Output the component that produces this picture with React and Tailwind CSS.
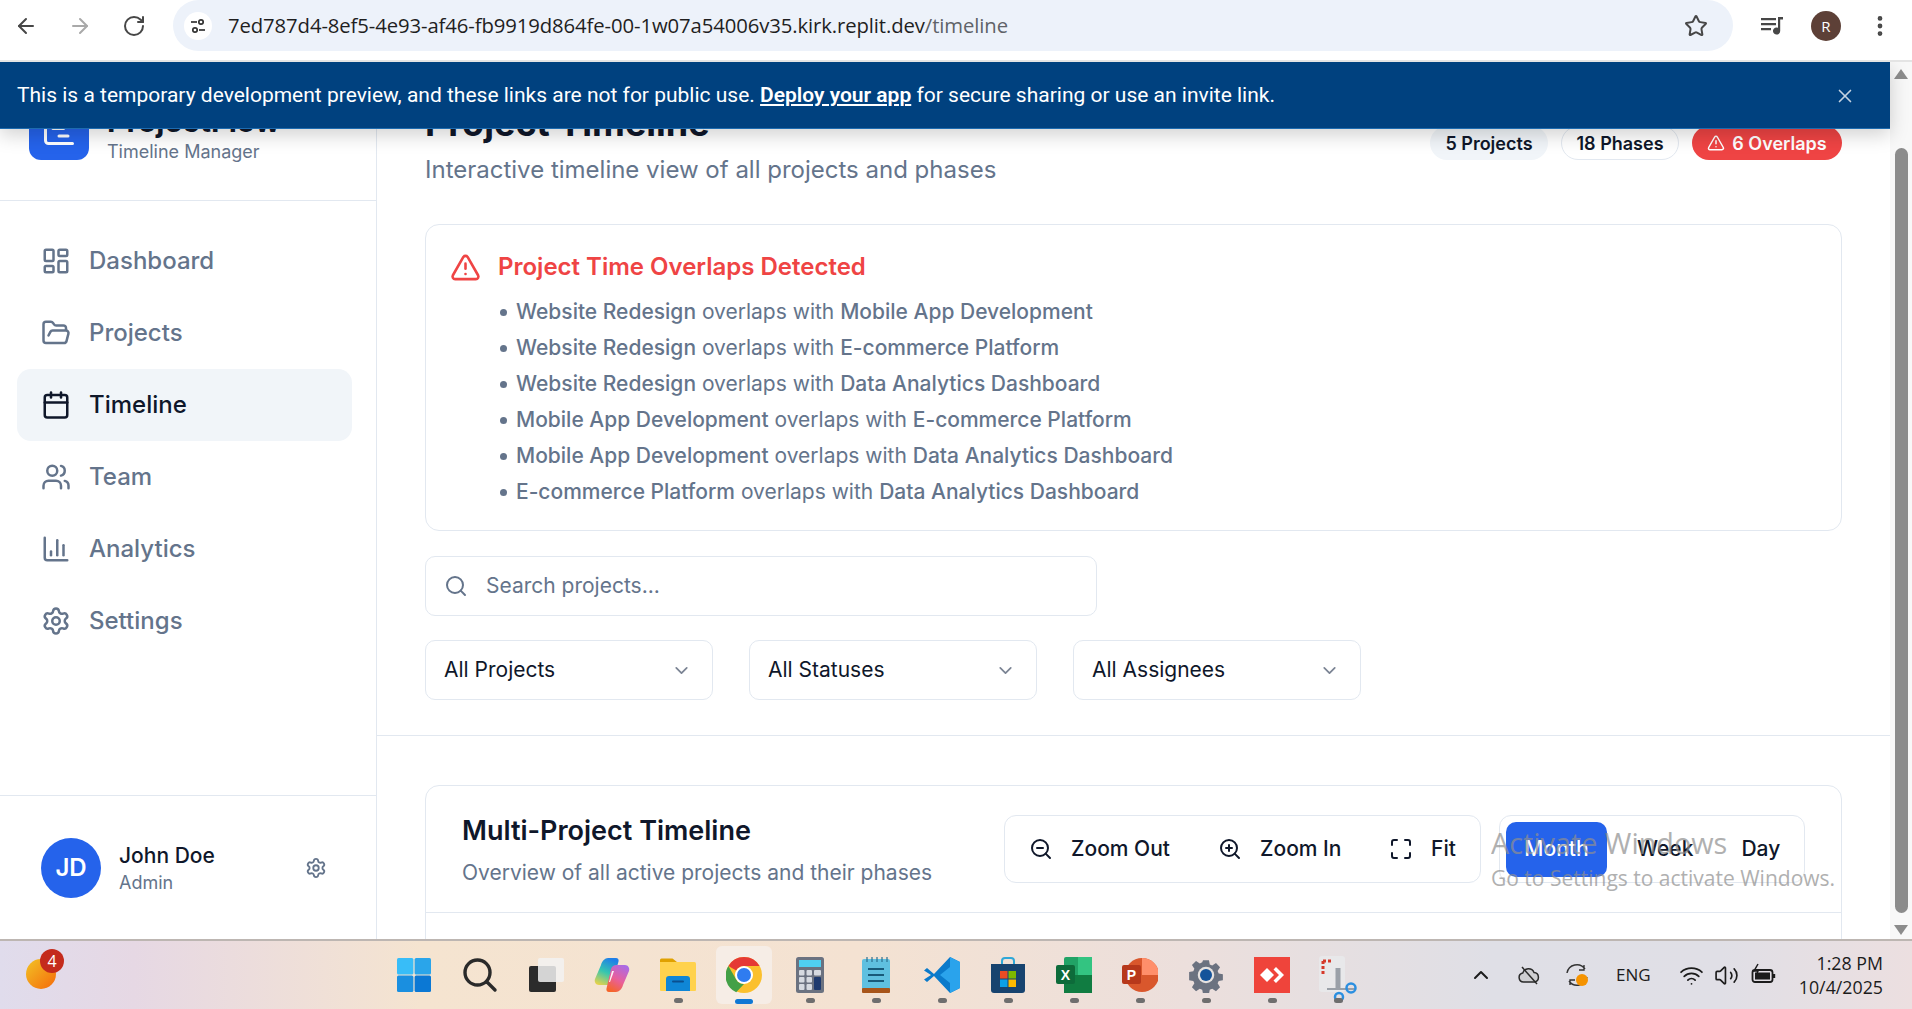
import {
  ArrowLeft,
  ArrowRight,
  RotateCw,
  Star,
  EllipsisVertical,
  X,
  ChartGantt,
  LayoutDashboard,
  FolderOpen,
  Calendar,
  Users,
  ChartColumn,
  Settings,
  TriangleAlert,
  Search,
  ChevronDown,
  ZoomOut,
  ZoomIn,
  Maximize,
  ChevronUp,
  Wifi,
  Volume2,
} from "lucide-react";

const navItems = [
  { label: "Dashboard", icon: LayoutDashboard },
  { label: "Projects", icon: FolderOpen },
  { label: "Timeline", icon: Calendar, active: true },
  { label: "Team", icon: Users },
  { label: "Analytics", icon: ChartColumn },
  { label: "Settings", icon: Settings },
];

const overlaps = [
  ["Website Redesign", "Mobile App Development"],
  ["Website Redesign", "E-commerce Platform"],
  ["Website Redesign", "Data Analytics Dashboard"],
  ["Mobile App Development", "E-commerce Platform"],
  ["Mobile App Development", "Data Analytics Dashboard"],
  ["E-commerce Platform", "Data Analytics Dashboard"],
];

function ChromeBar() {
  return (
    <div className="h-[62px] shrink-0 bg-white border-b-2 border-[#e4e4e4] flex items-start font-['Open_Sans',sans-serif]">
      <div className="flex items-center h-[52px] pl-[14px] gap-[30px] text-[#474747]">
        <ArrowLeft size={24} strokeWidth={2} />
        <ArrowRight size={24} strokeWidth={2} className="text-[#a9a9a9]" />
        <RotateCw size={24} strokeWidth={2} />
      </div>
      <div className="ml-[27px] w-[1560px] h-[51px] bg-[#edf2fa] rounded-r-full rounded-l-full flex items-center pl-[11px] pr-[25px]">
        <div className="w-[28px] h-[28px] rounded-full bg-white flex items-center justify-center">
          <svg width="18" height="18" viewBox="0 0 18 18" fill="none" stroke="#333" strokeWidth="1.7">
            <path d="M2 5h6" />
            <circle cx="12" cy="5" r="2.2" />
            <path d="M16 13h-6" />
            <circle cx="6" cy="13" r="2.2" />
          </svg>
        </div>
        <div className="ml-[16px] text-[20.3px] tracking-[-0.1px] text-[#1f1f1f]">
          7ed787d4-8ef5-4e93-af46-fb9919d864fe-00-1w07a54006v35.kirk.replit.dev<span className="text-[#5f6368]">/timeline</span>
        </div>
        <Star size={24} strokeWidth={2} className="ml-auto text-[#474747]" />
      </div>
      <div className="h-[52px] flex items-center text-[#474747]">
        <svg width="26" height="26" viewBox="0 0 26 26" className="ml-[26px]" fill="#474747">
          <path d="M2 5h15v2.2H2zM2 10h15v2.2H2zM2 15h10v2.2H2z" />
          <path d="M19 4h5v2.6h-2.8V18a3.6 3.6 0 1 1-2.2-3.3z" />
        </svg>
        <div className="ml-[26px] w-[30px] h-[30px] rounded-full bg-[#5d4037] text-white text-[15px] flex items-center justify-center">R</div>
        <EllipsisVertical size={26} strokeWidth={2.4} className="ml-[26px]" />
      </div>
    </div>
  );
}

function Banner() {
  return (
    <div className="absolute left-0 top-0 w-[1890px] h-[67px] bg-[#00417f] border-b border-[#1d6bb0] shadow-[0_6px_18px_rgba(0,0,0,0.18)] flex items-center pl-[17px] pr-[34px] pt-[2px] z-10 text-white text-[21px] font-['Roboto',sans-serif]">
      <span>
        This is a temporary development preview, and these links are not for public use. <a className="font-semibold underline">Deploy your app</a> for secure sharing or use an invite link.
      </span>
      <X size={22} strokeWidth={1.8} className="ml-auto text-[#c4d3e2]" />
    </div>
  );
}

function Sidebar() {
  return (
    <aside className="w-[377px] shrink-0 border-r border-[#e2e8f0] bg-white flex flex-col">
      <div className="flex items-start gap-[18px] pl-[29px] pt-[38px] pb-[35px] border-b border-[#e2e8f0]">
        <div className="w-[60px] h-[60px] rounded-[12px] bg-[#2563eb] flex items-center justify-center">
          <ChartGantt size={36} strokeWidth={2} className="text-white" />
        </div>
        <div className="pt-[3px]">
          <div className="text-[30px] leading-[36px] font-bold text-[#0f172a]">ProjectFlow</div>
          <div className="text-[18px] leading-[26px] text-[#64748b]">Timeline Manager</div>
        </div>
      </div>
      <nav className="pl-[17px] pr-[24px] pt-[24px] flex flex-col">
        {navItems.map((item) => (
          <div
            key={item.label}
            className={`h-[72px] rounded-[14px] flex items-center gap-[18px] pl-[24px] text-[24px] font-medium ${item.active ? "bg-[#f1f5f9] text-[#0f172a]" : "text-[#64748b]"}`}
          >
            <item.icon size={30} strokeWidth={2} />
            {item.label}
          </div>
        ))}
      </nav>
      <div className="mt-auto h-[144px] border-t border-[#e2e8f0] flex items-center pl-[41px] pr-[49px]">
        <div className="w-[60px] h-[60px] rounded-full bg-[#2563eb] text-white text-[24px] font-semibold flex items-center justify-center">JD</div>
        <div className="ml-[18px] pt-[2px]">
          <div className="text-[21px] leading-[28px] font-medium text-[#0f172a]">John Doe</div>
          <div className="text-[18px] leading-[26px] text-[#64748b]">Admin</div>
        </div>
        <Settings size={22} strokeWidth={2} className="ml-auto text-[#64748b]" />
      </div>
    </aside>
  );
}

function Badge({ className, children }) {
  return <div className={`h-[34px] rounded-full flex items-center justify-center text-[18px] font-semibold ${className}`}>{children}</div>;
}

function Select({ label }) {
  return (
    <div className="w-[288px] h-[60px] border border-[#e2e8f0] rounded-[10px] flex items-center pl-[18px] pr-[20px] text-[21px] text-[#0f172a]">
      {label}
      <ChevronDown size={21} strokeWidth={2} className="ml-auto text-[#7b8494]" />
    </div>
  );
}

function ToolButton({ icon: Icon, label, className }) {
  return (
    <div className={`flex items-center gap-[18px] text-[21px] font-medium text-[#0f172a] ${className}`}>
      <Icon size={24} strokeWidth={2} />
      {label}
    </div>
  );
}

function MainContent() {
  return (
    <main className="flex-1 bg-white min-w-0">
      <div className="border-b border-[#e2e8f0] px-[48px] pt-[37px] pb-[35px]">
        <div className="flex items-center justify-between">
          <div>
            <h1 className="text-[36px] leading-[48px] font-bold text-[#0f172a]">Project Timeline</h1>
            <p className="text-[24px] leading-[46px] text-[#64748b]">Interactive timeline view of all projects and phases</p>
          </div>
          <div className="flex items-center gap-[13px] mb-[6px]">
            <Badge className="w-[118px] bg-[#f1f5f9] text-[#0f172a]">5 Projects</Badge>
            <Badge className="w-[118px] border border-[#e2e8f0] text-[#0f172a]">18 Phases</Badge>
            <Badge className="w-[150px] gap-[7px] bg-[#ef4444] text-white">
              <TriangleAlert size={18} strokeWidth={2} />
              6 Overlaps
            </Badge>
          </div>
        </div>

        <div className="mt-[31px] h-[307px] border border-[#e2e8f0] rounded-[14px] pl-[24px] pr-[25px] pt-[26px]">
          <div className="flex items-center gap-[17px] text-[#ef4444]">
            <TriangleAlert size={31} strokeWidth={2} />
            <h2 className="text-[24px] leading-[32px] font-semibold">Project Time Overlaps Detected</h2>
          </div>
          <ul className="mt-[11px] pl-[50px]">
            {overlaps.map(([a, b], i) => (
              <li key={i} className="h-[36px] flex items-center text-[21px] text-[#64748b]">
                <span className="w-[7px] h-[7px] rounded-full bg-[#64748b] mr-[9px]" />
                <span className="font-medium">{a}</span>
                <span className="whitespace-pre"> overlaps with </span>
                <span className="font-medium">{b}</span>
              </li>
            ))}
          </ul>
        </div>

        <div className="mt-[25px] w-[672px] h-[60px] border border-[#e2e8f0] rounded-[10px] flex items-center pl-[18px] gap-[18px] text-[21px] text-[#64748b]">
          <Search size={24} strokeWidth={2} />
          Search projects...
        </div>

        <div className="mt-[24px] flex gap-[36px]">
          <Select label="All Projects" />
          <Select label="All Statuses" />
          <Select label="All Assignees" />
        </div>
      </div>

      <div className="px-[48px] pt-[49px]">
        <div className="h-[300px] border border-[#e2e8f0] rounded-[14px]">
          <div className="h-[127px] border-b border-[#e2e8f0] flex items-center pl-[36px] pr-[36px]">
            <div className="pt-[3px]">
              <h3 className="text-[27px] leading-[36px] font-semibold text-[#0f172a]">Multi-Project Timeline</h3>
              <p className="mt-[8px] text-[21px] leading-[32px] text-[#64748b]">Overview of all active projects and their phases</p>
            </div>
            <div className="ml-auto w-[477px] h-[68px] border border-[#e2e8f0] rounded-[12px] flex items-center pl-[24px]">
              <ToolButton icon={ZoomOut} label="Zoom Out" className="w-[189px]" />
              <ToolButton icon={ZoomIn} label="Zoom In" className="w-[171px]" />
              <ToolButton icon={Maximize} label="Fit" />
            </div>
            <div className="ml-[18px] w-[306px] h-[68px] border border-[#e2e8f0] rounded-[12px] flex items-center pl-[6px] text-[21px] font-medium text-[#0f172a]">
              <div className="w-[101px] h-[55px] rounded-[10px] bg-[#2563eb] text-white flex items-center justify-center">Month</div>
              <div className="ml-[30px]">Week</div>
              <div className="ml-[48px]">Day</div>
            </div>
          </div>
        </div>
      </div>
    </main>
  );
}

function Scrollbar() {
  return (
    <div className="w-[22px] shrink-0 bg-[#f8f8f8] flex flex-col items-center pt-[7px] pb-[4px]">
      <div className="w-0 h-0 border-l-[7px] border-r-[7px] border-b-[10px] border-l-transparent border-r-transparent border-b-[#8c8c8c]" />
      <div className="mt-[69px] w-[13px] h-[765px] rounded-full bg-[#8c8c8c]" />
      <div className="mt-auto w-0 h-0 border-l-[7px] border-r-[7px] border-t-[10px] border-l-transparent border-r-transparent border-t-[#8c8c8c]" />
    </div>
  );
}

function Activate() {
  return (
    <div className="absolute left-[1491px] top-[762px] z-20 text-[#8f8f8f] opacity-70 font-['Open_Sans',sans-serif] pointer-events-none">
      <div className="text-[28.8px] leading-[38px]">Activate Windows</div>
      <div className="text-[21px] leading-[28px] mt-[2px] whitespace-nowrap">Go to Settings to activate Windows.</div>
    </div>
  );
}

/* taskbar app icons */
const WinIcon = () => (
  <svg width="36" height="36" viewBox="0 0 36 36">
    <rect x="1" y="1" width="16.4" height="16.4" rx="1.5" fill="#38bdf8" />
    <rect x="18.6" y="1" width="16.4" height="16.4" rx="1.5" fill="#2aa5ea" />
    <rect x="1" y="18.6" width="16.4" height="16.4" rx="1.5" fill="#1a8fe0" />
    <rect x="18.6" y="18.6" width="16.4" height="16.4" rx="1.5" fill="#0b78d4" />
  </svg>
);
const SearchIcon = () => (
  <svg width="36" height="36" viewBox="0 0 36 36" fill="none" stroke="#2a2a2a" strokeWidth="3.4" strokeLinecap="round">
    <circle cx="15.5" cy="15.5" r="12.5" />
    <path d="M25 25l8 8" />
  </svg>
);
const TaskViewIcon = () => (
  <svg width="36" height="36" viewBox="0 0 36 36">
    <rect x="1" y="9" width="27" height="26" rx="2" fill="#2b2b2b" />
    <rect x="10" y="1" width="26" height="24" rx="2" fill="#f2f2f2" fillOpacity="0.85" />
  </svg>
);
const CopilotIcon = () => (
  <svg width="36" height="36" viewBox="0 0 36 36">
    <defs>
      <linearGradient id="cp1" x1="0.6" y1="0" x2="0.2" y2="1">
        <stop offset="0" stopColor="#1f7fe8" />
        <stop offset="0.5" stopColor="#35c6b0" />
        <stop offset="1" stopColor="#e6d24a" />
      </linearGradient>
      <linearGradient id="cp2" x1="0.8" y1="0" x2="0.3" y2="1">
        <stop offset="0" stopColor="#a86be8" />
        <stop offset="0.55" stopColor="#e85f9c" />
        <stop offset="1" stopColor="#f5652b" />
      </linearGradient>
    </defs>
    <path d="M14 1h8c2 0 3 1.500 2.500 3.400L19 24c-1 3-3 4-5 4H5c-3 0-5-3-4-6l6-14c1-4 4-7 7-7z" fill="url(#cp1)" />
    <path d="M22 35h-7c-2 0-3-1.500-2.500-3.400L17 12c1-3 3-4 5-4h9c3 0 5 3 4 6l-6 14c-1 4-4 7-7 7z" fill="url(#cp2)" />
    <path d="M20 14l-4 11h-1l3-11z" fill="#fff" fillOpacity="0.9" />
  </svg>
);
const FolderIcon = () => (
  <svg width="36" height="36" viewBox="0 0 36 36">
    <path d="M0 3a1.500 1.500 0 0 1 1.500-1.500h11L17 5v4H0z" fill="#e0a100" />
    <path d="M0 5h34.500a1.500 1.500 0 0 1 1.500 1.500V33a1 1 0 0 1-1 1H1a1 1 0 0 1-1-1z" fill="#ffd24d" />
    <path d="M6 22a3 3 0 0 1 3-3h18a3 3 0 0 1 3 3v12H6z" fill="#0f86d6" />
    <rect x="12" y="23.500" width="12" height="2" rx="1" fill="#0a4f8f" />
  </svg>
);
const ChromeIcon = () => (
  <svg width="36" height="36" viewBox="0 0 36 36">
    <circle cx="18" cy="18" r="18" fill="#fbc02d" />
    <path d="M18 0a18 18 0 0 1 15.600 9H18a9 9 0 0 0-7.800 4.500L2.400 9A18 18 0 0 1 18 0z" fill="#e53935" />
    <path d="M2.400 9l7.800 13.500A9 9 0 0 0 18 27l-7.800 8.200A18 18 0 0 1 2.400 9z" fill="#43a047" />
    <circle cx="18" cy="18" r="9" fill="#fff" />
    <circle cx="18" cy="18" r="7" fill="#2f7cf0" />
  </svg>
);
const CalcIcon = () => (
  <svg width="28" height="36" viewBox="0 0 28 36">
    <rect width="28" height="36" rx="2.500" fill="#6b7280" />
    <rect x="3" y="3" width="22" height="7" fill="#4fd0f2" />
    {[0, 1].map((r) =>
      [0, 1].map((c) => <rect key={`${r}${c}`} x={3 + c * 7.5} y={13 + r * 7} width="5.5" height="5.5" rx="1" fill="#d6dae0" />)
    )}
    <rect x="3" y="27" width="5.500" height="6" rx="1" fill="#d6dae0" />
    <rect x="10.500" y="27" width="5.500" height="6" rx="1" fill="#d6dae0" />
    <rect x="18" y="13" width="7" height="5.500" rx="1" fill="#d6dae0" />
    <rect x="18" y="20" width="7" height="13" rx="1" fill="#1e3a6e" />
  </svg>
);
const NotepadIcon = () => (
  <svg width="28" height="36" viewBox="0 0 28 36">
    <rect y="2" width="28" height="32" rx="2" fill="#5fc0e0" />
    <rect y="31" width="28" height="5" rx="1" fill="#a8551a" />
    <path d="M5 0v5M10 0v5M15 0v5M20 0v5M25 0v5" stroke="#2b6f8f" strokeWidth="1.200" />
    <path d="M6 12h16M6 18h16M6 24h16" stroke="#185a7a" strokeWidth="2" />
  </svg>
);
const VsCodeIcon = () => (
  <svg width="36" height="36" viewBox="0 0 36 36">
    <path d="M26 0l10 5v26l-10 5L10 19l-7 6-3-2.500L7 18 0 13.500 3 11l7 6z" fill="#0a7acb" />
    <path d="M26 0l10 5v26l-10 5zM26 10l-10 8 10 8z" fill="#2aa3ec" fillRule="evenodd" />
  </svg>
);
const StoreIcon = () => (
  <svg width="34" height="36" viewBox="0 0 34 36">
    <path d="M11 7V4a3 3 0 0 1 3-3h6a3 3 0 0 1 3 3v3" fill="none" stroke="#2fa8d8" strokeWidth="2" />
    <path d="M0 7h34v26a3 3 0 0 1-3 3H3a3 3 0 0 1-3-3z" fill="#17436f" />
    <rect x="9" y="14" width="7.500" height="7.500" fill="#e94b24" />
    <rect x="17.500" y="14" width="7.500" height="7.500" fill="#7db900" />
    <rect x="9" y="22.500" width="7.500" height="7.500" fill="#0ca0e6" />
    <rect x="17.500" y="22.500" width="7.500" height="7.500" fill="#fcb900" />
  </svg>
);
const ExcelIcon = () => (
  <svg width="36" height="36" viewBox="0 0 36 36">
    <rect x="8" width="28" height="36" rx="2" fill="#21a366" />
    <rect x="8" y="18" width="28" height="18" fill="#107c41" />
    <rect x="22" width="14" height="18" fill="#33c481" />
    <rect y="8" width="19" height="19" rx="2" fill="#0d6b3a" />
    <text x="9.500" y="22.500" textAnchor="middle" fontSize="14" fontWeight="700" fill="#fff" fontFamily="Liberation Sans, sans-serif">X</text>
  </svg>
);
const PptIcon = () => (
  <svg width="36" height="36" viewBox="0 0 36 36">
    <circle cx="20" cy="18" r="17" fill="#d9572c" />
    <path d="M20 1a17 17 0 0 1 17 17H20z" fill="#ff8f6b" />
    <rect y="8" width="19" height="19" rx="2" fill="#b7381b" />
    <text x="9.500" y="22.500" textAnchor="middle" fontSize="14" fontWeight="700" fill="#fff" fontFamily="Liberation Sans, sans-serif">P</text>
  </svg>
);
const GearIcon = () => (
  <svg width="36" height="36" viewBox="0 0 24 24">
    <path d="M9.800 1h4.400l.6 3.200 1.800.8 2.800-1.800 3 3-1.800 2.800.8 1.800 3.100.6v4.400l-3.100.6-.8 1.800 1.800 2.800-3 3-2.800-1.800-1.800.8-.6 3H9.800l-.6-3-1.800-.8-2.800 1.800-3-3 1.800-2.800-.8-1.800-3.100-.6V9.800l3.100-.6.8-1.800L1.600 4.600l3-3 2.800 1.800 1.800-.8z" fill="#6b7280" transform="translate(1.200 1.200) scale(0.9)" />
    <circle cx="12" cy="12" r="5.500" fill="#e6e2e0" />
    <circle cx="12" cy="12" r="4" fill="#14539a" />
  </svg>
);
const RedAppIcon = () => (
  <svg width="36" height="36" viewBox="0 0 36 36">
    <rect width="36" height="36" fill="#ef443b" />
    <path d="M13 11l7 7-7 7-7-7z" fill="#fff" />
    <path d="M22 10l8 8-8 8-2.500-2.500L25 18l-5.500-5.500z" fill="#fff" />
  </svg>
);
const SnipIcon = () => (
  <svg width="38" height="46" viewBox="0 0 38 46" className="translate-y-[4px]">
    <rect x="0" y="0" width="26" height="36" rx="3" fill="#e8e8ea" />
    <path d="M4 5h10M4 5v14" stroke="#d5392a" strokeWidth="3" strokeDasharray="3 2" fill="none" />
    <path d="M19 12v20" stroke="#9aa0a8" strokeWidth="5" />
    <path d="M8 33h28" stroke="#9aa0a8" strokeWidth="2" />
    <circle cx="32" cy="32" r="4.500" fill="none" stroke="#2b8fe0" strokeWidth="2.500" />
    <circle cx="20" cy="41" r="4" fill="none" stroke="#2b8fe0" strokeWidth="2.500" />
  </svg>
);

const taskbarApps = [
  { icon: WinIcon },
  { icon: SearchIcon },
  { icon: TaskViewIcon },
  { icon: CopilotIcon },
  { icon: FolderIcon, dot: true },
  { icon: ChromeIcon, active: true },
  { icon: CalcIcon, dot: true },
  { icon: NotepadIcon, dot: true },
  { icon: VsCodeIcon, dot: true },
  { icon: StoreIcon, dot: true },
  { icon: ExcelIcon, dot: true },
  { icon: PptIcon, dot: true },
  { icon: GearIcon, dot: true },
  { icon: RedAppIcon, dot: true },
  { icon: SnipIcon, dot: true },
];

function Taskbar() {
  return (
    <div className="h-[70px] shrink-0 border-t-2 border-[#bdb6b2] bg-[linear-gradient(90deg,#e0dcec_0%,#e6d8e4_7%,#f5e4d0_22%,#f4e2d2_45%,#ecdfdc_62%,#dfdfe6_78%,#e0dfe6_90%,#ecdfe0_100%)] flex items-center relative font-['Open_Sans',sans-serif]">
      <div className="absolute left-[26px] top-[18px] w-[30px] h-[30px] rounded-full bg-[linear-gradient(135deg,#f2c326,#f56a0a)]" />
      <div className="absolute left-[40px] top-[8px] w-[24px] h-[24px] rounded-full bg-[#c42b1c] text-white text-[16px] flex items-center justify-center">4</div>

      <div className="ml-[381px] flex items-center">
        {taskbarApps.map((app, i) => (
          <div key={i} className="relative w-[66px] h-[58px] flex items-center justify-center">
            {app.active && <div className="absolute left-[5px] top-0 w-[56px] h-[58px] rounded-[6px] bg-[#f6ede6]" />}
            <div className="relative">
              <app.icon />
            </div>
            {app.dot && <div className="absolute left-[29px] bottom-[1px] w-[9px] h-[5px] rounded-full bg-[#6e6e6e]" />}
            {app.active && <div className="absolute left-[24px] bottom-[0px] w-[18px] h-[5px] rounded-full bg-[#0f78d4]" />}
          </div>
        ))}
      </div>

      <div className="ml-auto flex items-center text-[#1c1c1c] pr-[29px]">
        <ChevronUp size={24} strokeWidth={2} />
        <svg width="24" height="24" viewBox="0 0 24 24" className="ml-[24px]" fill="none" stroke="#2a2a2a" strokeWidth="1.500">
          <path d="M6.500 19a4.500 4.500 0 0 1-.8-8.900A6 6 0 0 1 17 9.500a4.800 4.800 0 0 1 .5 9.500z" fill="#cfcfd2" />
          <path d="M5 4l15 17" />
        </svg>
        <svg width="26" height="26" viewBox="0 0 26 26" fill="none" stroke="#333" strokeWidth="1.400" className="ml-[23px]">
          <path d="M3 11a10 10 0 0 1 18-4M20 3v5h-5M23 15a10 10 0 0 1-18 4M6 23v-5h5" />
          <circle cx="18" cy="18" r="6" fill="#f59300" stroke="none" />
        </svg>
        <div className="ml-[26px] w-[52px] text-[17px]">ENG</div>
        <Wifi size={25} strokeWidth={1.7} className="ml-[11.4px]" />
        <Volume2 size={25} strokeWidth={1.6} className="ml-[10px]" />
        <svg width="26" height="24" viewBox="0 0 26 24" className="ml-[12px]" fill="none" stroke="#1c1c1c" strokeWidth="1.800">
          <rect x="1.500" y="7" width="20" height="12" rx="2.500" />
          <rect x="4" y="9.500" width="15" height="7" fill="#1c1c1c" stroke="none" />
          <path d="M23 11v4" strokeWidth="2.400" />
          <path d="M7 1L3 8h4l-2 5" strokeWidth="1.500" />
        </svg>
        <div className="ml-[21.4px] text-right text-[17.8px] leading-[24.5px]">
          <div>1:28 PM</div>
          <div>10/4/2025</div>
        </div>
      </div>
    </div>
  );
}

export default function App() {
  return (
    <div className="w-[1912px] h-[1009px] overflow-hidden flex flex-col font-['Inter',sans-serif] bg-white">
      <ChromeBar />
      <div className="relative flex flex-1 min-h-0 overflow-hidden">
        <Banner />
        <Sidebar />
        <MainContent />
        <Scrollbar />
        <Activate />
      </div>
      <Taskbar />
    </div>
  );
}
